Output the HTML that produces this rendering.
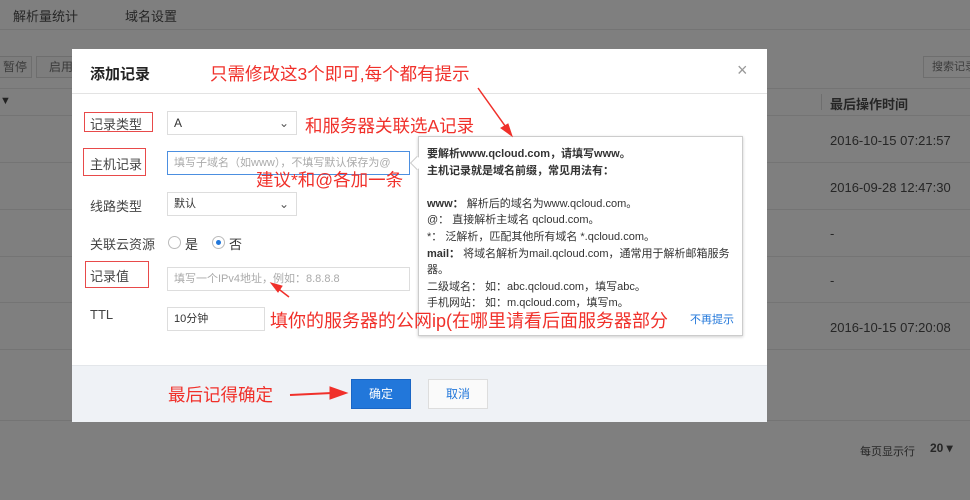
<!DOCTYPE html>
<html><head><meta charset="utf-8"><style>
*{margin:0;padding:0;box-sizing:border-box}
body{width:970px;height:500px;overflow:hidden;background:#fff;font-family:"Liberation Sans","Noto Sans CJK SC",sans-serif;font-size:12px;position:relative;color:#333}
.a{position:absolute}
.bgt{color:#4c4c4c}
.line{position:absolute;left:0;width:970px;height:1px;background:#e8e8e8}
.red{color:#f0302a;font-size:17.5px;white-space:nowrap;z-index:5}
.lbl{position:absolute;left:90px;font-size:13px;color:#444}
.box{position:absolute;border:1px solid #ddd;background:#fff;height:24px;padding-left:6px;line-height:22px;font-size:11px}
.rb{position:absolute;border:1px solid #e84a4a}
</style></head><body>
<div class="a bgt" style="left:13px;top:6px;font-size:13px">解析量统计</div>
<div class="a bgt" style="left:125px;top:6px;font-size:13px">域名设置</div>
<div class="line" style="top:29px"></div>
<div class="a" style="left:-5px;top:56px;width:37px;height:22px;border:1px solid #ddd;background:#fafafa;color:#777;line-height:20px;text-align:right;padding-right:4px">暂停</div>
<div class="a" style="left:36px;top:56px;width:40px;height:22px;border:1px solid #ddd;background:#fafafa;color:#777;line-height:20px;padding-left:12px">启用</div>
<div class="a" style="left:923px;top:56px;width:60px;height:22px;border:1px solid #ddd;color:#777;line-height:20px;padding-left:8px;font-size:11px">搜索记录</div>
<div class="line" style="top:88px"></div>
<div class="a" style="left:0;top:95px;font-size:11px;color:#444">▼</div>
<div class="a" style="left:821px;top:94px;width:1px;height:16px;background:#ddd"></div>
<div class="a bgt" style="left:830px;top:94px;font-size:13px;font-weight:bold">最后操作时间</div>
<div class="line" style="top:115px"></div>
<div class="a bgt" style="left:830px;top:133px;font-size:13px">2016-10-15 07:21:57</div>
<div class="line" style="top:162px"></div>
<div class="a bgt" style="left:830px;top:180px;font-size:13px">2016-09-28 12:47:30</div>
<div class="line" style="top:209px"></div>
<div class="a bgt" style="left:830px;top:226px;font-size:13px">-</div>
<div class="line" style="top:256px"></div>
<div class="a bgt" style="left:830px;top:273px;font-size:13px">-</div>
<div class="line" style="top:302px"></div>
<div class="a bgt" style="left:830px;top:320px;font-size:13px">2016-10-15 07:20:08</div>
<div class="line" style="top:349px"></div>
<div class="line" style="top:420px"></div>
<div class="a bgt" style="left:860px;top:443px;font-size:11px">每页显示行</div>
<div class="a bgt" style="left:930px;top:441px;font-size:12px;font-weight:bold">20 ▾</div>

<div class="a" style="left:0;top:0;width:970px;height:500px;background:rgba(0,0,0,0.5)"></div>

<div class="a" style="left:72px;top:49px;width:695px;height:373px;background:#fff">
 <div class="a" style="left:0;top:44px;width:695px;height:1px;background:#e3e3e3"></div>
 <div class="a" style="left:0;top:316px;width:695px;height:57px;background:#eff2f6;border-top:1px solid #e3e6ea"></div>
</div>
<div class="a" style="left:90px;top:63px;font-size:15px;font-weight:bold;color:#222">添加记录</div>
<div class="a" style="left:737px;top:60px;font-size:18px;color:#999">×</div>
<div class="a red" style="left:210px;top:61px">只需修改这3个即可,每个都有提示</div>

<div class="lbl" style="top:114px">记录类型</div><div class="rb" style="left:84px;top:112px;width:69px;height:20px"></div>
<div class="box" style="left:167px;top:111px;width:130px;font-size:12px">A<span class="a" style="right:7px;top:0;color:#555">⌄</span></div>
<div class="a red" style="left:305px;top:113px">和服务器关联选A记录</div>

<div class="lbl" style="top:154px">主机记录</div><div class="rb" style="left:83px;top:148px;width:63px;height:28px"></div>
<div class="box" style="left:167px;top:151px;width:243px;border-color:#4c8fe0;color:#aaa">填写子域名（如www），不填写默认保存为@</div>
<div class="a red" style="left:256px;top:167px">建议*和@各加一条</div>

<div class="lbl" style="top:196px">线路类型</div>
<div class="box" style="left:167px;top:192px;width:130px">默认<span class="a" style="right:7px;top:0;color:#555;font-size:12px">⌄</span></div>

<div class="lbl" style="top:234px">关联云资源</div>
<div class="a" style="left:168px;top:236px;width:13px;height:13px;border:1px solid #bbb;border-radius:50%"></div>
<div class="a" style="left:185px;top:234px;font-size:13px">是</div>
<div class="a" style="left:212px;top:236px;width:13px;height:13px;border:1px solid #bbb;border-radius:50%"><div class="a" style="left:3px;top:3px;width:5px;height:5px;border-radius:50%;background:#2277da"></div></div>
<div class="a" style="left:229px;top:234px;font-size:13px">否</div>

<div class="lbl" style="top:266px">记录值</div><div class="rb" style="left:85px;top:261px;width:64px;height:27px"></div>
<div class="box" style="left:167px;top:267px;width:243px;color:#aaa">填写一个IPv4地址，例如：8.8.8.8</div>

<div class="lbl" style="top:307px">TTL</div>
<div class="box" style="left:167px;top:307px;width:98px">10分钟</div>

<div class="a" style="left:418px;top:136px;width:325px;height:200px;background:#fff;border:1px solid #ccc;box-shadow:0 1px 3px rgba(0,0,0,.2);font-size:11px;line-height:16.6px;padding:9px 0 0 8px;color:#333">
<b>要解析www.qcloud.com，请填写www。</b><br><b>主机记录就是域名前缀，常见用法有：</b><br><br>
<b>www：</b> 解析后的域名为www.qcloud.com。<br>@： 直接解析主域名 qcloud.com。<br>*： 泛解析，匹配其他所有域名 *.qcloud.com。<br><b>mail：</b> 将域名解析为mail.qcloud.com，通常用于解析邮箱服务<br>器。<br>二级域名： 如：abc.qcloud.com，填写abc。<br>手机网站： 如：m.qcloud.com，填写m。
<div class="a" style="right:8px;bottom:6px;color:#2277da">不再提示</div>
</div>
<div class="a" style="left:412px;top:158px;width:10px;height:10px;background:#fff;border-left:1px solid #ccc;border-bottom:1px solid #ccc;transform:rotate(45deg)"></div>
<div class="a red" style="left:270px;top:307px;font-size:18px">填你的服务器的公网ip(在哪里请看后面服务器部分</div>

<div class="a red" style="left:168px;top:382px">最后记得确定</div>
<div class="a" style="left:351px;top:379px;width:60px;height:30px;background:#2277da;border:1px solid #1a66c5;color:#fff;text-align:center;line-height:28px">确定</div>
<div class="a" style="left:428px;top:379px;width:60px;height:30px;background:#fafafa;border:1px solid #ddd;color:#2277da;text-align:center;line-height:28px">取消</div>

<svg class="a" style="left:0;top:0;z-index:6" width="970" height="500">
<g stroke="#f0302a" fill="#f0302a">
<line x1="478" y1="88" x2="508" y2="130" stroke-width="1.5"/><polygon points="512,136 501,128 508,124"/>
<line x1="289" y1="297" x2="276" y2="287" stroke-width="1.5"/><polygon points="271,283 282,286 278,292"/>
<line x1="290" y1="395" x2="332" y2="393" stroke-width="2"/><polygon points="347,393 330,387 330,399"/>
</g></svg>
</body></html>
